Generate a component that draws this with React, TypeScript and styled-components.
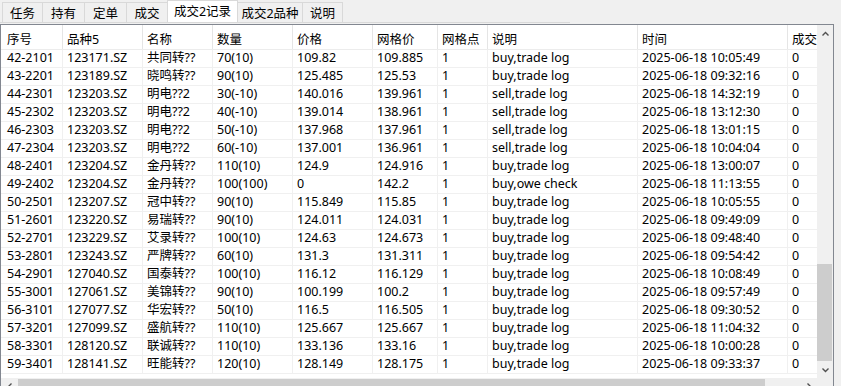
import React from 'react';
import styled, { createGlobalStyle } from 'styled-components';

const GlobalStyle = createGlobalStyle`
  html, body {
    margin: 0;
    padding: 0;
    background: #f0f0f0;
    overflow: hidden;
  }
  body {
    font-family: "Noto Sans", "Noto Sans CJK SC", sans-serif;
    font-size: 12px;
    color: #000;
  }
`;

const Window = styled.div`
  width: 841px;
  height: 386px;
  display: flex;
  flex-direction: column;
  overflow: hidden;
`;

const TabStrip = styled.div`
  display: flex;
  align-items: flex-end;
  width: 570px;
  height: 24px;
  padding-left: 3px;
  box-sizing: border-box;
  border-bottom: 1px solid #d9d9d9;
`;

const Tab = styled.div<{ $w: number; $active?: boolean }>`
  width: ${p => p.$w}px;
  height: ${p => (p.$active ? 22 : 20)}px;
  box-sizing: border-box;
  display: flex;
  justify-content: center;
  align-items: center;
  padding-bottom: ${p => (p.$active ? 3 : 0)}px;
  background: ${p => (p.$active ? '#ffffff' : '#f0f0f0')};
  border: 1px solid #d9d9d9;
  border-bottom: none;
  margin-left: -1px;
  position: relative;
  z-index: ${p => (p.$active ? 1 : 0)};
  white-space: nowrap;
  font-size: 12.5px;
`;

const GridFrame = styled.div`
  margin-top: 1px;
  width: 834px;
  height: 372px;
  box-sizing: border-box;
  border: 1px solid #828790;
  display: grid;
  grid-template-columns: 816px 16px;
  grid-template-rows: 353px 17px;
  background: #fff;
  font-size: 12.5px;
`;

const Body = styled.div`
  overflow: hidden;
  background: #fff;
`;

const COLS = '62px 80px 70px 80px 80px 65px 50px 150px 150px 150px';

const HeaderRow = styled.div`
  display: grid;
  grid-template-columns: ${COLS};
  height: 25px;
  box-sizing: border-box;
  border-bottom: 1px solid #ececec;
`;

const HeaderCell = styled.div<{ $pad: number }>`
  box-sizing: border-box;
  border-right: 1px solid #e5e5e5;
  padding: 6px 0 0 ${p => p.$pad}px;
  line-height: 17px;
  white-space: nowrap;
  overflow: hidden;
`;

const Row = styled.div`
  display: grid;
  grid-template-columns: ${COLS};
  height: 18px;
  box-sizing: border-box;
  border-bottom: 1px solid #f0f0f0;
`;

const Cell = styled.div<{ $pad: number }>`
  box-sizing: border-box;
  border-right: 1px solid #f0f0f0;
  padding-left: ${p => p.$pad}px;
  line-height: 16px;
  white-space: nowrap;
  overflow: hidden;
`;

const VScroll = styled.div`
  display: flex;
  flex-direction: column;
  background: #f0f0f0;
`;

const ScrollButton = styled.div`
  flex: 0 0 17px;
  display: flex;
  align-items: center;
  justify-content: center;
  color: #505050;
`;

const Track = styled.div<{ $horizontal?: boolean }>`
  flex: 1;
  display: flex;
  flex-direction: ${p => (p.$horizontal ? 'row' : 'column')};
  justify-content: flex-start;
`;

const VThumb = styled.div`
  margin-top: auto;
  width: 15px;
  height: 97px;
  background: #cdcdcd;
`;

const HScroll = styled.div`
  display: flex;
  background: #f0f0f0;
`;

const HThumb = styled.div`
  width: 747px;
  height: 15px;
  margin-top: 1px;
  background: #cdcdcd;
`;

const Corner = styled.div`
  background: #f0f0f0;
`;

const Chevron: React.FC<{ dir: 'up' | 'down' | 'left' | 'right' }> = ({ dir }) => {
  const pts: Record<string, string> = {
    up: '0.5,4.5 3.5,1.5 6.5,4.5',
    down: '0.5,1.5 3.5,4.5 6.5,1.5',
    left: '4.5,0.5 1.5,3.5 4.5,6.5',
    right: '1.5,0.5 4.5,3.5 1.5,6.5',
  };
  const vertical = dir === 'up' || dir === 'down';
  return (
    <svg width={vertical ? 7 : 6} height={vertical ? 6 : 7} viewBox={vertical ? '0 0 7 6' : '0 0 6 7'}>
      <polyline points={pts[dir]} fill="none" stroke="currentColor" strokeWidth="1.4" />
    </svg>
  );
};

const tabs = [
  { label: '任务', w: 41 },
  { label: '持有', w: 43 },
  { label: '定单', w: 43 },
  { label: '成交', w: 42 },
  { label: '成交2记录', w: 71, active: true },
  { label: '成交2品种', w: 66 },
  { label: '说明', w: 41 },
];

const headers = ['序号', '品种5', '名称', '数量', '价格', '网格价', '网格点', '说明', '时间', '成交'];

const rows: string[][] = [
  ['42-2101', '123171.SZ', '共同转??', '70(10)', '109.82', '109.885', '1', 'buy,trade log', '2025-06-18 10:05:49', '0'],
  ['43-2201', '123189.SZ', '晓鸣转??', '90(10)', '125.485', '125.53', '1', 'buy,trade log', '2025-06-18 09:32:16', '0'],
  ['44-2301', '123203.SZ', '明电??2', '30(-10)', '140.016', '139.961', '1', 'sell,trade log', '2025-06-18 14:32:19', '0'],
  ['45-2302', '123203.SZ', '明电??2', '40(-10)', '139.014', '138.961', '1', 'sell,trade log', '2025-06-18 13:12:30', '0'],
  ['46-2303', '123203.SZ', '明电??2', '50(-10)', '137.968', '137.961', '1', 'sell,trade log', '2025-06-18 13:01:15', '0'],
  ['47-2304', '123203.SZ', '明电??2', '60(-10)', '137.001', '136.961', '1', 'sell,trade log', '2025-06-18 10:04:04', '0'],
  ['48-2401', '123204.SZ', '金丹转??', '110(10)', '124.9', '124.916', '1', 'buy,trade log', '2025-06-18 13:00:07', '0'],
  ['49-2402', '123204.SZ', '金丹转??', '100(100)', '0', '142.2', '1', 'buy,owe check', '2025-06-18 11:13:55', '0'],
  ['50-2501', '123207.SZ', '冠中转??', '90(10)', '115.849', '115.85', '1', 'buy,trade log', '2025-06-18 10:05:55', '0'],
  ['51-2601', '123220.SZ', '易瑞转??', '90(10)', '124.011', '124.031', '1', 'buy,trade log', '2025-06-18 09:49:09', '0'],
  ['52-2701', '123229.SZ', '艾录转??', '100(10)', '124.63', '124.673', '1', 'buy,trade log', '2025-06-18 09:48:40', '0'],
  ['53-2801', '123243.SZ', '严牌转??', '60(10)', '131.3', '131.311', '1', 'buy,trade log', '2025-06-18 09:54:42', '0'],
  ['54-2901', '127040.SZ', '国泰转??', '100(10)', '116.12', '116.129', '1', 'buy,trade log', '2025-06-18 10:08:49', '0'],
  ['55-3001', '127061.SZ', '美锦转??', '90(10)', '100.199', '100.2', '1', 'buy,trade log', '2025-06-18 09:57:49', '0'],
  ['56-3101', '127077.SZ', '华宏转??', '50(10)', '116.5', '116.505', '1', 'buy,trade log', '2025-06-18 09:30:52', '0'],
  ['57-3201', '127099.SZ', '盛航转??', '110(10)', '125.667', '125.667', '1', 'buy,trade log', '2025-06-18 11:04:32', '0'],
  ['58-3301', '128120.SZ', '联诚转??', '110(10)', '133.136', '133.16', '1', 'buy,trade log', '2025-06-18 10:00:28', '0'],
  ['59-3401', '128141.SZ', '旺能转??', '120(10)', '128.149', '128.175', '1', 'buy,trade log', '2025-06-18 09:33:37', '0'],
];

const App: React.FC = () => {
  return (
    <>
      <GlobalStyle />
      <Window>
        <TabStrip>
          {tabs.map(t => (
            <Tab key={t.label} $w={t.w} $active={t.active}>
              {t.label}
            </Tab>
          ))}
        </TabStrip>
        <GridFrame>
          <Body>
            <HeaderRow>
              {headers.map((h, i) => (
                <HeaderCell key={h} $pad={i === 0 ? 6 : 4}>
                  {h}
                </HeaderCell>
              ))}
            </HeaderRow>
            {rows.map(r => (
              <Row key={r[0]}>
                {r.map((c, i) => (
                  <Cell key={i} $pad={i === 0 ? 6 : 4}>
                    {c}
                  </Cell>
                ))}
              </Row>
            ))}
          </Body>
          <VScroll>
            <ScrollButton>
              <Chevron dir="up" />
            </ScrollButton>
            <Track>
              <VThumb />
            </Track>
            <ScrollButton>
              <Chevron dir="down" />
            </ScrollButton>
          </VScroll>
          <HScroll>
            <ScrollButton>
              <Chevron dir="left" />
            </ScrollButton>
            <Track $horizontal>
              <HThumb />
            </Track>
            <ScrollButton>
              <Chevron dir="right" />
            </ScrollButton>
          </HScroll>
          <Corner />
        </GridFrame>
      </Window>
    </>
  );
};

export default App;
